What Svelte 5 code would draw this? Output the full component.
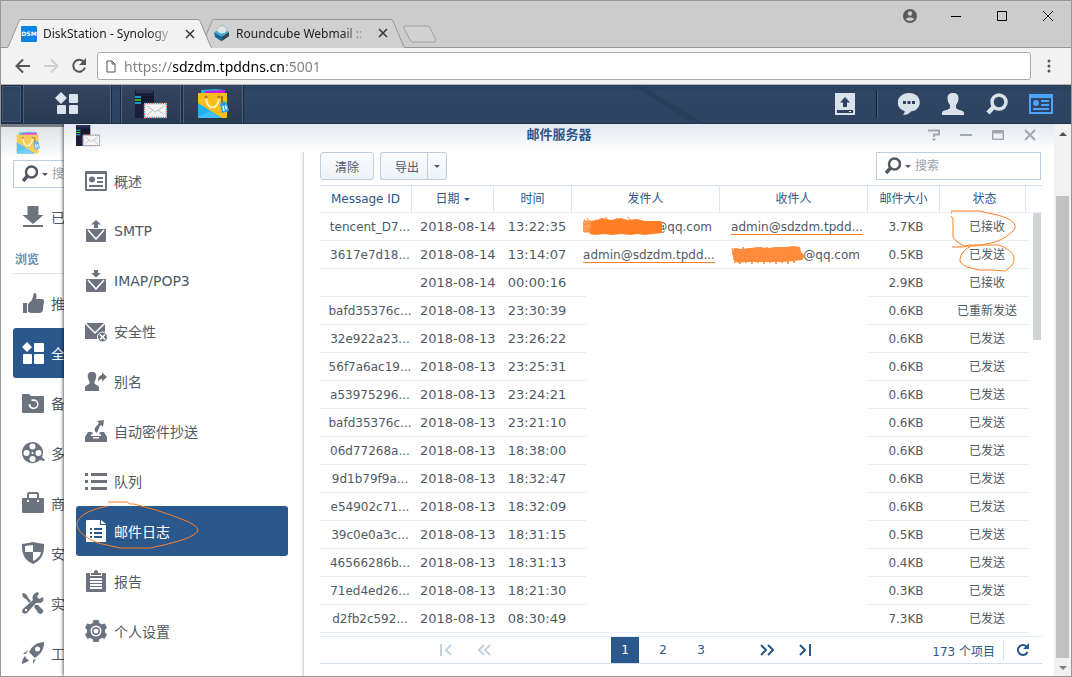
<script>
  let url = $state("https://sdzdm.tpddns.cn:5001");
  let packageSearch = $state("");
  let logSearch = $state("");
  let activeNav = $state("log");
  let currentPage = $state(1);

  const envelope = "M1 9h20v12q0 1-1 1H2q-1 0-1-1z";

  const navItems = [
    { id: "overview", label: "概述", d: "M0 2q0-1 1-1h20q1 0 1 1v18q0 1-1 1H1q-1 0-1-1zM2 4v15h18V4zM4 9.500a3 3 0 1 0 6 0a3 3 0 1 0-6 0zM12 7h6v2h-6zM12 11h6v2h-6zM4 15h14v2H4z" },
    { id: "smtp", label: "SMTP", d: envelope + "M11 0l5 4.500h-3V8H9V4.500H6z", cut: "M3 10l8 9 8-9" },
    { id: "imap", label: "IMAP/POP3", d: envelope + "M9 0h4v3h3l-5 4.500L6 3h3z", cut: "M3 10l8 9 8-9" },
    { id: "security", label: "安全性", d: "M0 3h20v16H0z", cut: "M0 3l10 10L20 3", badge: true },
    { id: "alias", label: "别名", d: "M7 2c3.500 0 4.500 2 4.200 5c-.2 2.200-1.200 3.500-1.700 4.500v2c1 1.500 4.500 1.800 4.500 4.500v3H0v-3c0-2.700 3.500-3 4.500-4.500v-2C4 10.500 3 9.200 2.800 7C2.500 4 3.500 2 7 2zM17 2.500l5 4.500-5 4.500V9c-2 0-3 1-3.500 3c-1-4 .5-6.500 3.500-7z" },
    { id: "bcc", label: "自动密件抄送", d: "M3 12h4l1 2c-3 0-2 2-2 2h10s1-2-2-2l1-2h4l3 5v4q0 1-1 1H1q-1 0-1-1v-4zM8 17h6v1.500H8zM12 1l7-1-1 7-2-2c-2 1-2 4-4 8c-2-1-3-3-2-5c1-2 3-3 4-5z" },
    { id: "queue", label: "队列", d: "M0 3h3v3H0zM6 3h16v3H6zM0 10h3v3H0zM6 10h16v3H6zM0 17h3v3H0zM6 17h16v3H6z" },
    { id: "log", label: "邮件日志", d: "M2 0h13v5h6v16q0 1-1 1H2q-1 0-1-1V1q0-1 1-1zM16 0l5 4h-5zM5 8h2v2H5zM9 8h8v2H9zM5 12h2v2H5zM9 12h8v2H9zM5 16h2v2H5zM9 16h8v2H9z" },
    { id: "report", label: "报告", d: "M2 3h3v3h12V3h3q1 0 1 1v17q0 1-1 1H2q-1 0-1-1V4q0-1 1-1zM6 3h3q0-3 2-3t2 3h3v2H6zM5 8h12v2H5zM5 11h12v2H5zM5 14h12v2H5zM5 17h12v2H5z" },
    { id: "settings", label: "个人设置", d: "M8.500 0h5l.8 3 2.400 1.300 3-.8L22 7.800l-2 2.200v2.500l2 2-2.300 4.200-3-.8-2.400 1.400-.8 2.700h-5l-.8-2.700-2.400-1.400-3 .8L0 14.500l2-2V10L0 7.800l2.300-4.300 3 .8L7.700 3zM5.500 11a5.500 5.500 0 1 0 11 0a5.500 5.500 0 1 0-11 0zM7 11a4 4 0 1 0 8 0a4 4 0 1 0-8 0zM8.500 11a2.500 2.500 0 1 0 5 0a2.500 2.500 0 1 0-5 0z" },
  ];

  const categories = [
    { label: "推荐", d: "M1 11h4v10H1zM6 12l4-4 2-7c3 0 3 3 2 6h6q2 0 2 2l-1 8q0 4-4 4H9l-3-1z" },
    { label: "全部", active: true, d: "M5 0l5 5-5 5-5-5zM13 1h8q1 0 1 1v7q0 1-1 1h-8q-1 0-1-1V2q0-1 1-1zM2 12h7q1 0 1 1v8q0 1-1 1H2q-1 0-1-1v-8q0-1 1-1zM13 12h8q1 0 1 1v8q0 1-1 1h-8q-1 0-1-1v-8q0-1 1-1z" },
    { label: "备份", d: "M0 3q0-1 1-1h6l2 2h12q1 0 1 1v15q0 1-1 1H1q-1 0-1-1zM9.500 6v3H6.500l5 0a3.300 3.300 0 1 1-3 3.300H6.500a5 5 0 1 0 5-5H9.500z" },
    { label: "多媒体", d: "M0 11a10.500 10.500 0 1 1 20 4l3 3-1 1-4-1A10.500 10.500 0 0 1 0 11zM7.500 4.500a3 3 0 1 0 6 0a3 3 0 1 0-6 0zM7.500 17a3 3 0 1 0 6 0a3 3 0 1 0-6 0zM1.500 11a3 3 0 1 0 6 0a3 3 0 1 0-6 0zM13.500 11a3 3 0 1 0 6 0a3 3 0 1 0-6 0zM9.500 11a1 1 0 1 0 2 0a1 1 0 1 0-2 0z" },
    { label: "商业", d: "M1 6h4V2q0-2 2-2h8q2 0 2 2v4h4q1 0 1 1v13q0 1-1 1H1q-1 0-1-1V7q0-1 1-1zM7 2v4h8V2zM5 8v2h2V8zM15 8v2h2V8z" },
    { label: "安全性", d: "M0 2Q7 1 11 0q4 1 11 2q1 15-11 20Q-1 17 0 2zM3 4v6h8V3zM11 10v9q7-3 8-9z" },
    { label: "实用工具", d: "M1 1l3 1 3 5 2 2-2 2-2-3L1 5 0 2zM15 0l2 1-2 4 2 2 4-2q2 6-5 6h-2l-9 10q-3 2-5-1q0-3 2-4L11 8Q9 3 15 0zM3 17v2h2v-2zM13 13l3 0 5 5q1 2-2 4-3 0-4-3l-3-4z" },
    { label: "工具程序", d: "M22 0q1 9-9 16l-6-6Q12 0 22 0zM13 7a2.500 2.500 0 1 0 5 0a2.500 2.500 0 1 0-5 0zM6 8L1 12l3 0zM14 17l-3 5v-4zM3 14q1 3 4 4-1 2-7 4 0-5 3-8z" },
  ];

  const messages = [
    { id: "tencent_D7...", date: "2018-08-14", time: "13:22:35", from: "@qq.com", to: "admin@sdzdm.tpdd...", size: "3.7KB", status: "已接收" },
    { id: "3617e7d18...", date: "2018-08-14", time: "13:14:07", from: "admin@sdzdm.tpdd...", to: "@qq.com", size: "0.5KB", status: "已发送" },
    { id: "", date: "2018-08-14", time: "00:00:16", size: "2.9KB", status: "已接收" },
    { id: "bafd35376c...", date: "2018-08-13", time: "23:30:39", size: "0.6KB", status: "已重新发送" },
    { id: "32e922a23...", date: "2018-08-13", time: "23:26:22", size: "0.6KB", status: "已发送" },
    { id: "56f7a6ac19...", date: "2018-08-13", time: "23:25:31", size: "0.6KB", status: "已发送" },
    { id: "a53975296...", date: "2018-08-13", time: "23:24:21", size: "0.6KB", status: "已发送" },
    { id: "bafd35376c...", date: "2018-08-13", time: "23:21:10", size: "0.6KB", status: "已发送" },
    { id: "06d77268a...", date: "2018-08-13", time: "18:38:00", size: "0.6KB", status: "已发送" },
    { id: "9d1b79f9a...", date: "2018-08-13", time: "18:32:47", size: "0.6KB", status: "已发送" },
    { id: "e54902c71...", date: "2018-08-13", time: "18:32:09", size: "0.6KB", status: "已发送" },
    { id: "39c0e0a3c...", date: "2018-08-13", time: "18:31:15", size: "0.5KB", status: "已发送" },
    { id: "46566286b...", date: "2018-08-13", time: "18:31:13", size: "0.4KB", status: "已发送" },
    { id: "71ed4ed26...", date: "2018-08-13", time: "18:21:30", size: "0.3KB", status: "已发送" },
    { id: "d2fb2c592...", date: "2018-08-13", time: "08:30:49", size: "7.3KB", status: "已发送" },
  ];
</script>

{#snippet bagIcon()}
  <svg viewBox="0 0 32 30" class="art">
    <path d="M4 1l14-1 10 1v6H4z" fill="#13b9d6" />
    <path d="M8 2l20-1v7H6z" fill="#d51be0" />
    <path d="M1 4h29v24q0 1-1 1H2q-1 0-1-1z" fill="#f6bd1b" />
    <path d="M1 14l24 15H2q-1 0-1-1z" fill="#1fb0f5" />
    <path d="M1 28l12-6 11 7H2q-1 0-1-1z" fill="#3cc0fa" />
    <path d="M9 8c0 14 13 14 13 0" fill="none" stroke="#fff3c4" stroke-width="2" />
    <circle cx="9" cy="8" r="1.500" fill="#b37a00" />
    <circle cx="22" cy="8" r="1.500" fill="#b37a00" />
    <path d="M25 7v8" stroke="#8c5d00" stroke-width="1.500" />
    <path d="M23 15l4-3 3 2 2 8-7 2z" fill="#2b9ff0" />
    <path d="M26 17l1 5M28.500 16.500l1 4" stroke="#fff" stroke-width="1.500" />
  </svg>
{/snippet}

{#snippet mailIcon()}
  <svg viewBox="0 0 32 30" class="art">
    <path d="M0 1h19v28H0z" fill="#1b1e3c" />
    <path d="M1 1h17v3H1z" fill="#30355c" />
    <path d="M0 8h19M0 11h19M0 14h19" stroke="#0b0d1e" stroke-width="1" />
    <path d="M0 8h6M0 14h6" stroke="#25c4ee" stroke-width="1.500" />
    <path d="M0 11h6" stroke="#52d726" stroke-width="1.500" />
    <path d="M9 14h23v15H9z" fill="#f4f4f4" />
    <path d="M9.500 14.500h22v14h-22z" fill="none" stroke="#38a1dc" stroke-width="1.500" stroke-dasharray="1.500 3" />
    <path d="M9.500 14.500h22v14h-22z" fill="none" stroke="#ef6b3a" stroke-width="1.500" stroke-dasharray="1.500 3" stroke-dashoffset="2.200" />
    <path d="M12 17l8.500 6 8.500-6M12 26l6-5M29 26l-6-5" fill="none" stroke="#bbb" stroke-width="1" />
  </svg>
{/snippet}

{#snippet searchIcon()}
  <svg viewBox="0 0 16 18" class="search-icon">
    <circle cx="9.500" cy="7" r="5.500" fill="none" stroke="#505a64" stroke-width="2.500" />
    <path d="M5.500 11L1 16" stroke="#505a64" stroke-width="3.500" />
  </svg>
  <span class="caret"></span>
{/snippet}

{#snippet smudge(wide)}
  {#if wide}
    <svg class="smudge" width="80" height="18" viewBox="0 0 80 18">
      <path d="M0 4l8-1v13l-8-1z" opacity=".75" />
      <path d="M8 4l6-1 5-2 9 2 9-2 8 2 9-1 8 2 16 0 1 1v11l-9 1-9 1-6-1-8 1-9-1-9 1-8-1-9 1-5-1z" />
      <path d="M1 2l2 3M4 1l2 4M1 8l6-2M2 12l6 0M1 15l6-1M12 2l2 2M22 0l3 3M33 1l2 2M44 0l4 3" class="strokes" />
    </svg>
  {:else}
    <svg class="smudge" width="74" height="20" viewBox="0 0 74 20">
      <path d="M1 8l2-5 7 1 9-1 8-1 10 1 8-1 9 0 9-1 6 1 1 5 4 4-3 4-9 1-10 1-9 0-10 0-9 0-9 0-8 1-4-3z" opacity=".9" />
      <path d="M1 3l3 15 2-15 3 16 3-17 3 16 3-15 3 16 3-16 3 15 3-16 3 17 3-17 3 16 3-15 3 16 3-17 3 16 3-16 3 17 3-17 3 16 2-13 4 9" class="strokes" />
    </svg>
  {/if}
{/snippet}

{#snippet tabShape(fill)}
  <svg class="tab-shape" viewBox="0 0 205 29" preserveAspectRatio="none">
    <path d="M0 28.500Q1 28.500 1.500 27L12 2Q12.500.5 14 .5H191Q192.500.5 193 2L203.500 27Q204 28.500 205 28.500V29H0z" {fill} />
    <path d="M0 28.500Q1 28.500 1.500 27L12 2Q12.500.5 14 .5H191Q192.500.5 193 2L203.500 27Q204 28.500 205 28.500" fill="none" stroke="#979797" />
  </svg>
{/snippet}

{#snippet tabClose()}
  <button class="tab-close" aria-label="Close tab">
    <svg width="10" height="10" viewBox="0 0 10 10"><path d="M1 1l8 8M9 1L1 9" stroke="#333" stroke-width="1.500" /></svg>
  </button>
{/snippet}

<div class="browser">
  <header class="tab-strip">
    <div class="tab active">
      {@render tabShape("#f2f2f2")}
      <span class="favicon dsm">DSM</span>
      <span class="tab-title">DiskStation - Synology</span>
      {@render tabClose()}
    </div>
    <div class="tab">
      {@render tabShape("#d0d0d0")}
      <svg class="favicon" viewBox="0 0 16 16">
        <path d="M0 7l7 4 8-4v4l-8 5-6-4z" fill="#166a9e" />
        <path d="M8 11l7-4v4l-7 5z" fill="#37474f" />
        <circle cx="8" cy="5.500" r="5" fill="#dfe3e6" stroke="#8a9297" stroke-width=".5" />
        <path d="M0 7l8 4.500L15 7l-2-1q-5 5-10 0z" fill="#3fa9dd" />
      </svg>
      <span class="tab-title">Roundcube Webmail ::</span>
      {@render tabClose()}
    </div>
    <button class="new-tab" aria-label="New tab">
      <svg width="36" height="18" viewBox="0 0 36 18"><path d="M3 1h22q2 0 3 2l6 12q0 2-2 2H11q-2 0-3-2L2 3q-1-2 1-2z" fill="#d2d2d2" stroke="#a0a0a0" /></svg>
    </button>
    <div class="system-buttons">
      <button aria-label="Profile">
        <svg width="14" height="14" viewBox="0 0 14 14"><circle cx="7" cy="7" r="7" fill="#5a5a5a" /><circle cx="7" cy="4.500" r="2.200" fill="#ccc" /><path d="M2.500 10Q7 6.500 11.500 10Q7 14 2.500 10z" fill="#ccc" /></svg>
      </button>
      <button aria-label="Minimize"><svg width="10" height="10"><path d="M0 5.500h10" stroke="#000" /></svg></button>
      <button aria-label="Maximize"><svg width="10" height="10"><path d="M.5.5h9v9h-9z" fill="none" stroke="#000" /></svg></button>
      <button aria-label="Close"><svg width="10" height="10"><path d="M0 0l10 10M10 0L0 10" stroke="#000" /></svg></button>
    </div>
  </header>

  <div class="toolbar">
    <button aria-label="Back"><svg width="16" height="16" viewBox="0 0 16 16"><path d="M15 8H2M8 1.500L1.500 8 8 14.500" fill="none" stroke="#555" stroke-width="2" /></svg></button>
    <button aria-label="Forward"><svg width="16" height="16" viewBox="0 0 16 16"><path d="M1 8h13M8 1.500L14.500 8 8 14.500" fill="none" stroke="#d0d0d0" stroke-width="2" /></svg></button>
    <button aria-label="Reload"><svg width="16" height="16" viewBox="0 0 16 16"><path d="M13 4A6 6 0 1 0 14 9.500" fill="none" stroke="#555" stroke-width="2" /><path d="M15 0v7H8z" fill="#555" /></svg></button>
    <label class="address">
      <svg width="10" height="13" viewBox="0 0 10 13"><path d="M1 1h5l3 3v8H1zM6 1v3h3" fill="none" stroke="#555" /></svg>
      <input type="text" aria-label="Address" bind:value={url} />
    </label>
    <button class="menu" aria-label="Menu"><svg width="4" height="14"><circle cx="2" cy="2" r="1.500" fill="#555" /><circle cx="2" cy="7" r="1.500" fill="#555" /><circle cx="2" cy="12" r="1.500" fill="#555" /></svg></button>
  </div>

  <nav class="taskbar">
    <span class="task-edge"></span>
    <button class="task menu-task" aria-label="主菜单">
      <svg width="24" height="24" viewBox="0 0 24 24" fill="#dbe3ec"><path d="M6 0l6 6-6 6-6-6z" /><rect x="14" y="2" width="9" height="9" rx="1" /><rect x="2" y="13" width="9" height="9" rx="1" /><rect x="14" y="13" width="9" height="9" rx="1" /></svg>
    </button>
    <button class="task" aria-label="邮件服务器">{@render mailIcon()}</button>
    <button class="task" aria-label="套件中心">{@render bagIcon()}</button>
    <svg class="streak" viewBox="0 0 70 39"><path d="M0 0h8l62 37v2h-8z" fill="#293e5a" /></svg>
    <div class="tray">
      <button class="upload" aria-label="上传">
        <svg width="20" height="22" viewBox="0 0 20 22"><path d="M0 0h20v22H0z" fill="#d9e1eb" /><path d="M10 4l5 5.500h-3V14H8V9.500H5zM2 17h16v3H2z" fill="#2d425e" /><path d="M14 18h2v1h-2z" fill="#fff" /></svg>
      </button>
      <button aria-label="消息">
        <svg width="22" height="22" viewBox="0 0 22 22"><path d="M11 0c14 0 14 17 2 18.500Q10 22 5 22q2-2 1.500-4C-5 14-1 0 11 0z" fill="#d9e1eb" /><path d="M5 8h3v3H5zM9.500 8h3v3h-3zM14 8h3v3h-3z" fill="#2d425e" /></svg>
      </button>
      <button aria-label="用户">
        <svg width="22" height="22" viewBox="0 0 22 22"><path d="M11 0c4.500 0 6 2.500 5.300 7c-.3 2.500-1.500 4-2.300 5v3c2 2.500 8 2 8 5v2H0v-2c0-3 6-2.500 8-5v-3c-.8-1-2-2.500-2.300-5C5 2.500 6.500 0 11 0z" fill="#d9e1eb" /></svg>
      </button>
      <button aria-label="搜索">
        <svg width="22" height="22" viewBox="0 0 22 22"><circle cx="13" cy="9" r="7" fill="none" stroke="#d9e1eb" stroke-width="3.500" /><path d="M7.500 14L2 20" stroke="#d9e1eb" stroke-width="4.500" /></svg>
      </button>
      <button aria-label="小组件">
        <svg width="24" height="20" viewBox="0 0 24 20"><path d="M0 0h24v20H0zM2 4v14h20V4z" fill="#4da3ff" fill-rule="evenodd" /><circle cx="7" cy="9" r="3" fill="#4da3ff" /><path d="M12 7h8M12 11h8M4 15h16" stroke="#4da3ff" stroke-width="2" /></svg>
      </button>
    </div>
  </nav>

  <main class="desktop">
    <section class="package-center">
      <div class="package-head"><span class="package-logo">{@render bagIcon()}</span></div>
      <label class="search">
        {@render searchIcon()}
        <input type="text" placeholder="搜索" bind:value={packageSearch} />
      </label>
      <button class="category installed">
        <svg class="icon" viewBox="0 0 22 22"><path d="M5.500 1q0-1 1-1h9q1 0 1 1v8h5L11 18 .5 9h5zM1 19h20v2H1z" /></svg>
        <span>已安装</span>
      </button>
      <h2>浏览</h2>
      {#each categories as item}
        <button class="category" class:active={item.active}>
          <svg class="icon" viewBox="0 0 22 22"><path d={item.d} fill-rule="evenodd" /></svg>
          <span>{item.label}</span>
        </button>
      {/each}
    </section>

    <section class="mail-server">
      <div class="window-head">
        <span class="window-logo">{@render mailIcon()}</span>
        <h1>邮件服务器</h1>
        <div class="window-buttons">
          <button aria-label="帮助"><svg width="12" height="12"><path d="M0 1.500h11v4H6V8M4.500 10.500h3" fill="none" stroke="#a0a9b2" stroke-width="2" /></svg></button>
          <button aria-label="最小化"><svg width="12" height="12"><path d="M0 6h12" stroke="#a0a9b2" stroke-width="2" /></svg></button>
          <button aria-label="最大化"><svg width="12" height="12"><path d="M0 1h12v10H0zM1.500 4.500v5h9v-5z" fill="#a0a9b2" fill-rule="evenodd" /></svg></button>
          <button aria-label="关闭"><svg width="12" height="12"><path d="M1 1l10 10M11 1L1 11" stroke="#a0a9b2" stroke-width="2" /></svg></button>
        </div>
      </div>

      <nav class="sidebar">
        {#each navItems as item (item.id)}
          <button class="nav-item" class:active={activeNav === item.id} onclick={() => (activeNav = item.id)}>
            <svg class="icon" viewBox="0 0 22 22">
              <path d={item.d} fill-rule="evenodd" />
              {#if item.cut}<path d={item.cut} class="cut" />{/if}
              {#if item.badge}
                <circle cx="17.500" cy="17" r="5" stroke="#fff" />
                <path d="M15 14.500l5 5M20 14.500l-5 5" class="cut" />
              {/if}
            </svg>
            <span>{item.label}</span>
            {#if item.id === "log"}
              <svg class="scribble nav-mark" width="126" height="50" viewBox="0 0 126 50"><path d="M32 1H51L54 3H58L80 9Q95 14 108 19Q121 24 122 29Q121 34 106 39Q90 44 74 47H44L22 42Q4 35 1 25Q0 17 12 11Q21 7 32 5" /></svg>
            {/if}
          </button>
        {/each}
      </nav>

      <div class="content">
        <div class="actions">
          <button class="button">清除</button>
          <div class="split">
            <button class="button">导出</button>
            <button class="button more" aria-label="导出选项"><span class="caret"></span></button>
          </div>
          <label class="search">
            {@render searchIcon()}
            <input type="text" placeholder="搜索" bind:value={logSearch} />
          </label>
        </div>

        <div class="grid">
          <table>
            <colgroup>
              <col class="c-id" /><col class="c-date" /><col class="c-time" /><col /><col /><col class="c-size" /><col class="c-status" /><col class="c-end" />
            </colgroup>
            <thead>
              <tr>
                <th>Message ID</th>
                <th>日期<span class="caret"></span></th>
                <th>时间</th>
                <th>发件人</th>
                <th>收件人</th>
                <th>邮件大小</th>
                <th class="status">状态</th>
                <th></th>
              </tr>
            </thead>
            <tbody>
              {#each messages as row}
                <tr class:blank={!row.from}>
                  <td>{row.id}</td>
                  <td class="stamp">{row.date}</td>
                  <td class="stamp">{row.time}</td>
                  {#each [row.from, row.to] as address, i}
                    <td class="address-cell" class:masked={address === "@qq.com"}>
                      {#if address === "@qq.com"}
                        {@render smudge(i === 0)}{address}
                      {:else if address}
                        <span class="underlined">{address}</span>
                      {/if}
                    </td>
                  {/each}
                  <td class="size">{row.size}</td>
                  <td>{row.status}</td>
                  <td class="end"></td>
                </tr>
              {/each}
            </tbody>
          </table>
          <span class="grid-thumb"></span>
          <svg class="scribble status-marks" width="66" height="62" viewBox="0 0 66 62"><path d="M0 4V1H28L42 4Q57 7 63 13Q66 18 61 22Q51 31 40 33L24 36H13L5 31L2 27V9L0 6M1 37H12L18 35H48Q61 40 63 47Q64 54 57 59L54 61L40 60H28L16 57Q8 53 9 49Q10 41 20 36" /></svg>
        </div>

        <footer class="pager">
          <div class="steps">
            <button disabled aria-label="第一页"><svg width="14" height="12"><path d="M2 0v12M12 1L7 6l5 5" /></svg></button>
            <button disabled aria-label="上一页"><svg width="14" height="12"><path d="M7 1L2 6l5 5M13 1L8 6l5 5" /></svg></button>
          </div>
          <div class="pages">
            {#each [1, 2, 3] as page}
              <button class:current={page === currentPage} onclick={() => (currentPage = page)}>{page}</button>
            {/each}
          </div>
          <div class="steps">
            <button aria-label="下一页"><svg width="14" height="12"><path d="M1 1l5 5-5 5M8 1l5 5-5 5" /></svg></button>
            <button aria-label="最后一页"><svg width="14" height="12"><path d="M2 1l5 5-5 5M12 0v12" /></svg></button>
          </div>
          <span class="total">173 个项目</span>
          <button class="refresh" aria-label="刷新"><svg width="14" height="14"><path d="M11 4A5 5 0 1 0 11.500 9" /><path d="M13 0v6H7z" class="tip" /></svg></button>
        </footer>
      </div>
    </section>

    <div class="page-scroll">
      <span class="arrow up"></span>
      <span class="page-thumb"></span>
      <span class="arrow down"></span>
    </div>
  </main>
</div>

<style>
  :global(body) {
    font-family: "DejaVu Sans", "Noto Sans CJK SC", sans-serif;
    font-size: 12px;
    color: #505a64;
  }

  * {
    box-sizing: border-box;
  }

  button,
  input {
    font: inherit;
    color: inherit;
    margin: 0;
    padding: 0;
    border: 0;
    background: none;
  }

  button {
    display: flex;
    align-items: center;
    justify-content: center;
  }

  input {
    min-width: 0;
    flex: 1;
    outline: none;
  }

  input::placeholder {
    color: #9aa2aa;
    opacity: 1;
  }

  h1,
  h2 {
    margin: 0;
  }

  svg {
    flex: none;
  }

  .browser {
    display: flex;
    flex-direction: column;
    min-height: 100vh;
    border: 1px solid #979797;
    background: #fff;
  }

  /* browser chrome */
  .tab-strip {
    display: flex;
    align-items: flex-end;
    height: 47px;
    padding-left: 6px;
    background: #ccc;
    border-bottom: 1px solid #979797;
    font-family: "Noto Sans", "Open Sans", sans-serif;
    font-size: 12px;
    color: #222;
  }

  .tab {
    position: relative;
    display: flex;
    align-items: center;
    gap: 6px;
    width: 205px;
    height: 28px;
    padding: 0 14px;
  }

  .tab + .tab {
    margin-left: -12px;
  }

  .tab.active {
    z-index: 1;
    height: 29px;
    margin-bottom: -1px;
  }

  .tab-shape {
    position: absolute;
    inset: 0;
    width: 100%;
    height: 29px;
  }

  .tab > :not(.tab-shape) {
    position: relative;
  }

  .favicon {
    width: 16px;
    height: 16px;
    flex: none;
  }

  .dsm {
    border-radius: 1px;
    background: #0a84e4;
    color: #fff;
    font: bold 6px/16px "DejaVu Sans", sans-serif;
    text-align: center;
  }

  .tab-title {
    flex: 1;
    white-space: nowrap;
    mask-image: linear-gradient(to right, #000 80%, transparent);
  }

  .tab-close {
    width: 16px;
    height: 16px;
  }

  .new-tab {
    height: 26px;
    margin-left: -3px;
    align-items: flex-start;
    padding-top: 4px;
  }

  .system-buttons {
    display: flex;
    align-self: flex-start;
    margin-left: auto;
  }

  .system-buttons button {
    width: 46px;
    height: 29px;
  }

  .toolbar {
    display: flex;
    align-items: center;
    gap: 12px;
    height: 37px;
    padding-left: 14px;
    background: #f2f2f2;
    border-bottom: 1px solid #b5b5b0;
  }

  .address {
    display: flex;
    align-items: center;
    gap: 8px;
    flex: 1;
    height: 28px;
    margin-left: -2px;
    padding: 0 8px;
    border: 1px solid #a9a9a9;
    border-radius: 3px;
    background: #fff;
  }

  .address input {
    font-family: "Noto Sans", "Open Sans", sans-serif;
    font-size: 14px;
    background: linear-gradient(to right, #808080 48px, #000 48px, #000 160px, #808080 160px);
    background-clip: text;
    -webkit-text-fill-color: transparent;
  }

  .toolbar .menu {
    width: 40px;
    margin-left: -12px;
    padding-right: 4px;
  }

  /* DSM taskbar */
  .taskbar {
    position: relative;
    display: flex;
    height: 39px;
    background: linear-gradient(#2b3f5b, #2f4665 20%, #2d4360);
    border-bottom: 1px solid #22324a;
  }

  .task-edge {
    width: 21px;
    border: 1px solid #1d2c41;
    box-shadow: inset 0 0 0 1px #40597a;
  }

  .task {
    width: 62px;
    border: solid #1d2c41;
    border-width: 0 1px;
    box-shadow: inset 1px 0 #4a627f, inset -1px 0 #4a627f;
    background: linear-gradient(#34465f, #283a52);
  }

  .task .art {
    width: 32px;
    height: 30px;
  }

  .menu-task {
    width: 90px;
    margin-right: 8px;
  }

  .streak {
    position: absolute;
    left: 59%;
    top: 0;
    width: 70px;
    height: 39px;
  }

  .tray {
    display: flex;
    align-items: center;
    margin-left: auto;
    padding-right: 8px;
  }

  .tray button {
    width: 44px;
    height: 28px;
  }

  .tray .upload {
    width: 64px;
    margin-right: 10px;
    border-right: 1px solid #15202f;
    box-shadow: 1px 0 #4a627f;
  }

  /* desktop windows */
  .desktop {
    position: relative;
    display: flex;
    flex: 1;
  }

  .package-center {
    position: absolute;
    inset: 0;
    overflow: hidden;
    padding-left: 12px;
    border-top: 3px solid #767c84;
    background: #fff;
  }

  .package-head {
    height: 33px;
    margin-left: -12px;
    padding: 4px 0 0 15px;
    background: linear-gradient(#dfe2e6, #fff);
  }

  .package-logo {
    display: block;
    opacity: 0.7;
  }

  .package-logo :global(svg) {
    width: 24px;
    height: 24px;
  }

  .search {
    display: flex;
    align-items: center;
    width: 165px;
    height: 28px;
    padding: 0 8px;
    border: 1px solid #c0cddb;
    background: #fff;
  }

  .search-icon {
    width: 16px;
    height: 18px;
  }

  .search .caret {
    margin: 0 4px;
  }

  .caret {
    display: inline-block;
    border: 3px solid transparent;
    border-top-color: currentColor;
    border-bottom: 0;
  }

  .icon {
    width: 22px;
    height: 22px;
    overflow: visible;
    fill: #6b747e;
  }

  .cut {
    fill: none;
    stroke: #fff;
    stroke-width: 1.5px;
  }

  .category,
  .nav-item {
    position: relative;
    justify-content: flex-start;
    gap: 7px;
    width: 212px;
    height: 50px;
    padding-left: 9px;
    border-radius: 3px;
    font-size: 14px;
    white-space: nowrap;
  }

  .installed {
    margin-top: 4px;
  }

  .category.active,
  .nav-item.active {
    background: #2a588c;
    color: #fff;
  }

  .active .icon {
    fill: #fff;
  }

  .package-center h2 {
    height: 28px;
    margin: 4px 0;
    padding-left: 2px;
    border-bottom: 1px solid #e3e8ec;
    color: #6c93b5;
    font-size: 12px;
    line-height: 28px;
  }

  .mail-server {
    position: relative;
    display: grid;
    grid-template: auto 1fr / 240px 1fr;
    flex: 1;
    margin-left: 63px;
    background: #fff;
    box-shadow: -1px 0 3px rgba(0, 0, 0, 0.6);
    clip-path: inset(0 0 0 -8px);
  }

  .window-head {
    grid-column: 1 / -1;
    display: grid;
    grid-template-columns: 1fr auto 1fr;
    height: 28px;
    padding: 0 8px;
    background: linear-gradient(#e3e9f2, #fff);
  }

  .window-logo {
    padding-left: 4px;
  }

  .window-logo :global(svg) {
    width: 24px;
    height: 23px;
  }

  .window-head h1 {
    color: #2a588c;
    font-size: 13px;
    line-height: 22px;
  }

  .window-buttons {
    display: flex;
    justify-content: flex-end;
    height: 22px;
  }

  .window-buttons button {
    width: 32px;
  }

  .sidebar {
    padding: 4px 12px 16px;
    border-right: 1px solid #d8d8d8;
    box-shadow: inset -2px 0 1px #f2f2f2;
  }

  .scribble {
    position: absolute;
    fill: none;
    stroke: #ff7f27;
    stroke-width: 1px;
  }

  .nav-mark {
    left: 0;
    top: -5px;
  }

  .content {
    min-width: 0;
    padding: 0 12px 12px 16px;
  }

  .actions {
    display: flex;
    gap: 6px;
    height: 33px;
  }

  .actions .search {
    margin: 0 1px 0 auto;
  }

  .button {
    height: 28px;
    width: 54px;
    border: 1px solid #c0cddb;
    border-radius: 3px;
    background: linear-gradient(#fafcfd, #edf3f9);
  }

  .split {
    display: flex;
  }

  .split .button:first-child {
    width: 47px;
    padding-left: 6px;
    border-right: 0;
    border-radius: 3px 0 0 3px;
  }

  .split .more {
    width: 20px;
    border-radius: 0 3px 3px 0;
  }

  .grid {
    position: relative;
  }

  table {
    width: 100%;
    table-layout: fixed;
    border-collapse: separate;
    border-spacing: 0;
    border-top: 1px solid #d5dfe9;
  }

  .c-id {
    width: 92px;
  }

  .c-date {
    width: 82px;
  }

  .c-time {
    width: 78px;
  }

  .c-size {
    width: 72px;
  }

  .c-status {
    width: 86px;
  }

  .c-end {
    width: 16px;
  }

  th,
  td {
    height: 28px;
    padding: 0;
    border-bottom: 1px solid #e6edf4;
    text-align: center;
    font-weight: normal;
    white-space: nowrap;
    line-height: 16px;
  }

  th {
    height: 27px;
    border-right: 1px solid #dce5ee;
    color: #2a588c;
  }

  th.status {
    padding-left: 4px;
  }

  th:last-child {
    border-right: 0;
  }

  th .caret {
    margin-left: 4px;
    vertical-align: middle;
  }

  td {
    padding-left: 8px;
  }

  td.size {
    padding-left: 4px;
  }

  .stamp {
    font-size: 13px;
  }

  .address-cell {
    position: relative;
    padding-left: 6px;
  }

  .masked {
    text-align: right;
    padding-right: 8px;
  }

  .smudge {
    position: absolute;
    left: 11px;
    top: 4px;
    fill: #ff7f27;
  }

  .strokes {
    fill: none;
    stroke: #ff8a3a;
    stroke-width: 1px;
  }

  .underlined {
    border-bottom: 1px solid #ff7f27;
  }

  .blank .address-cell,
  td.end {
    border-bottom: 0;
  }

  .blank .address-cell:nth-child(4) {
    background: linear-gradient(#e6edf4, #e6edf4) left bottom / 14px 1px no-repeat;
  }

  td.end {
    background: linear-gradient(#e6edf4, #e6edf4) left bottom / 3px 1px no-repeat;
  }

  .blank:last-child .address-cell {
    border-bottom: 1px solid #e6edf4;
    background: none;
  }

  .grid-thumb {
    position: absolute;
    top: 28px;
    right: 1px;
    width: 8px;
    height: 127px;
    background: #d2d3d5;
  }

  .status-marks {
    right: 25px;
    top: 25px;
  }

  .pager {
    display: flex;
    align-items: center;
    height: 28px;
    margin-top: 3px;
    padding-left: 112px;
    border-top: 1px solid #e3ebf3;
    border-bottom: 1px solid #d5dfe9;
    color: #2a588c;
  }

  .steps,
  .pages {
    display: flex;
    gap: 10px;
  }

  .pages {
    margin: 0 38px 0 113px;
  }

  .pager button {
    width: 28px;
    height: 26px;
  }

  .pager .current {
    background: #2a588c;
    color: #fff;
  }

  .pager svg {
    fill: none;
    stroke: #2a588c;
    stroke-width: 2px;
  }

  .pager button:disabled svg {
    stroke: #c3d0dd;
  }

  .pager .tip {
    fill: #2a588c;
    stroke: none;
  }

  .total {
    margin-left: auto;
    padding-right: 8px;
  }

  .pager .refresh {
    width: 39px;
    height: 20px;
    border-left: 1px solid #d5dfe9;
  }

  .page-scroll {
    position: relative;
    display: flex;
    flex-direction: column;
    align-items: center;
    width: 17px;
    background: #f1f1f1;
  }

  .page-thumb {
    flex: 1;
    width: 13px;
    margin: 60px 0 8px;
    background: #c1c1c1;
  }

  .arrow {
    border: 4px solid transparent;
  }

  .up {
    margin-top: 8px;
    border-bottom-color: #505050;
    border-top: 0;
  }

  .down {
    border-top-color: #808080;
    border-bottom: 0;
    margin-bottom: 6px;
  }
</style>
